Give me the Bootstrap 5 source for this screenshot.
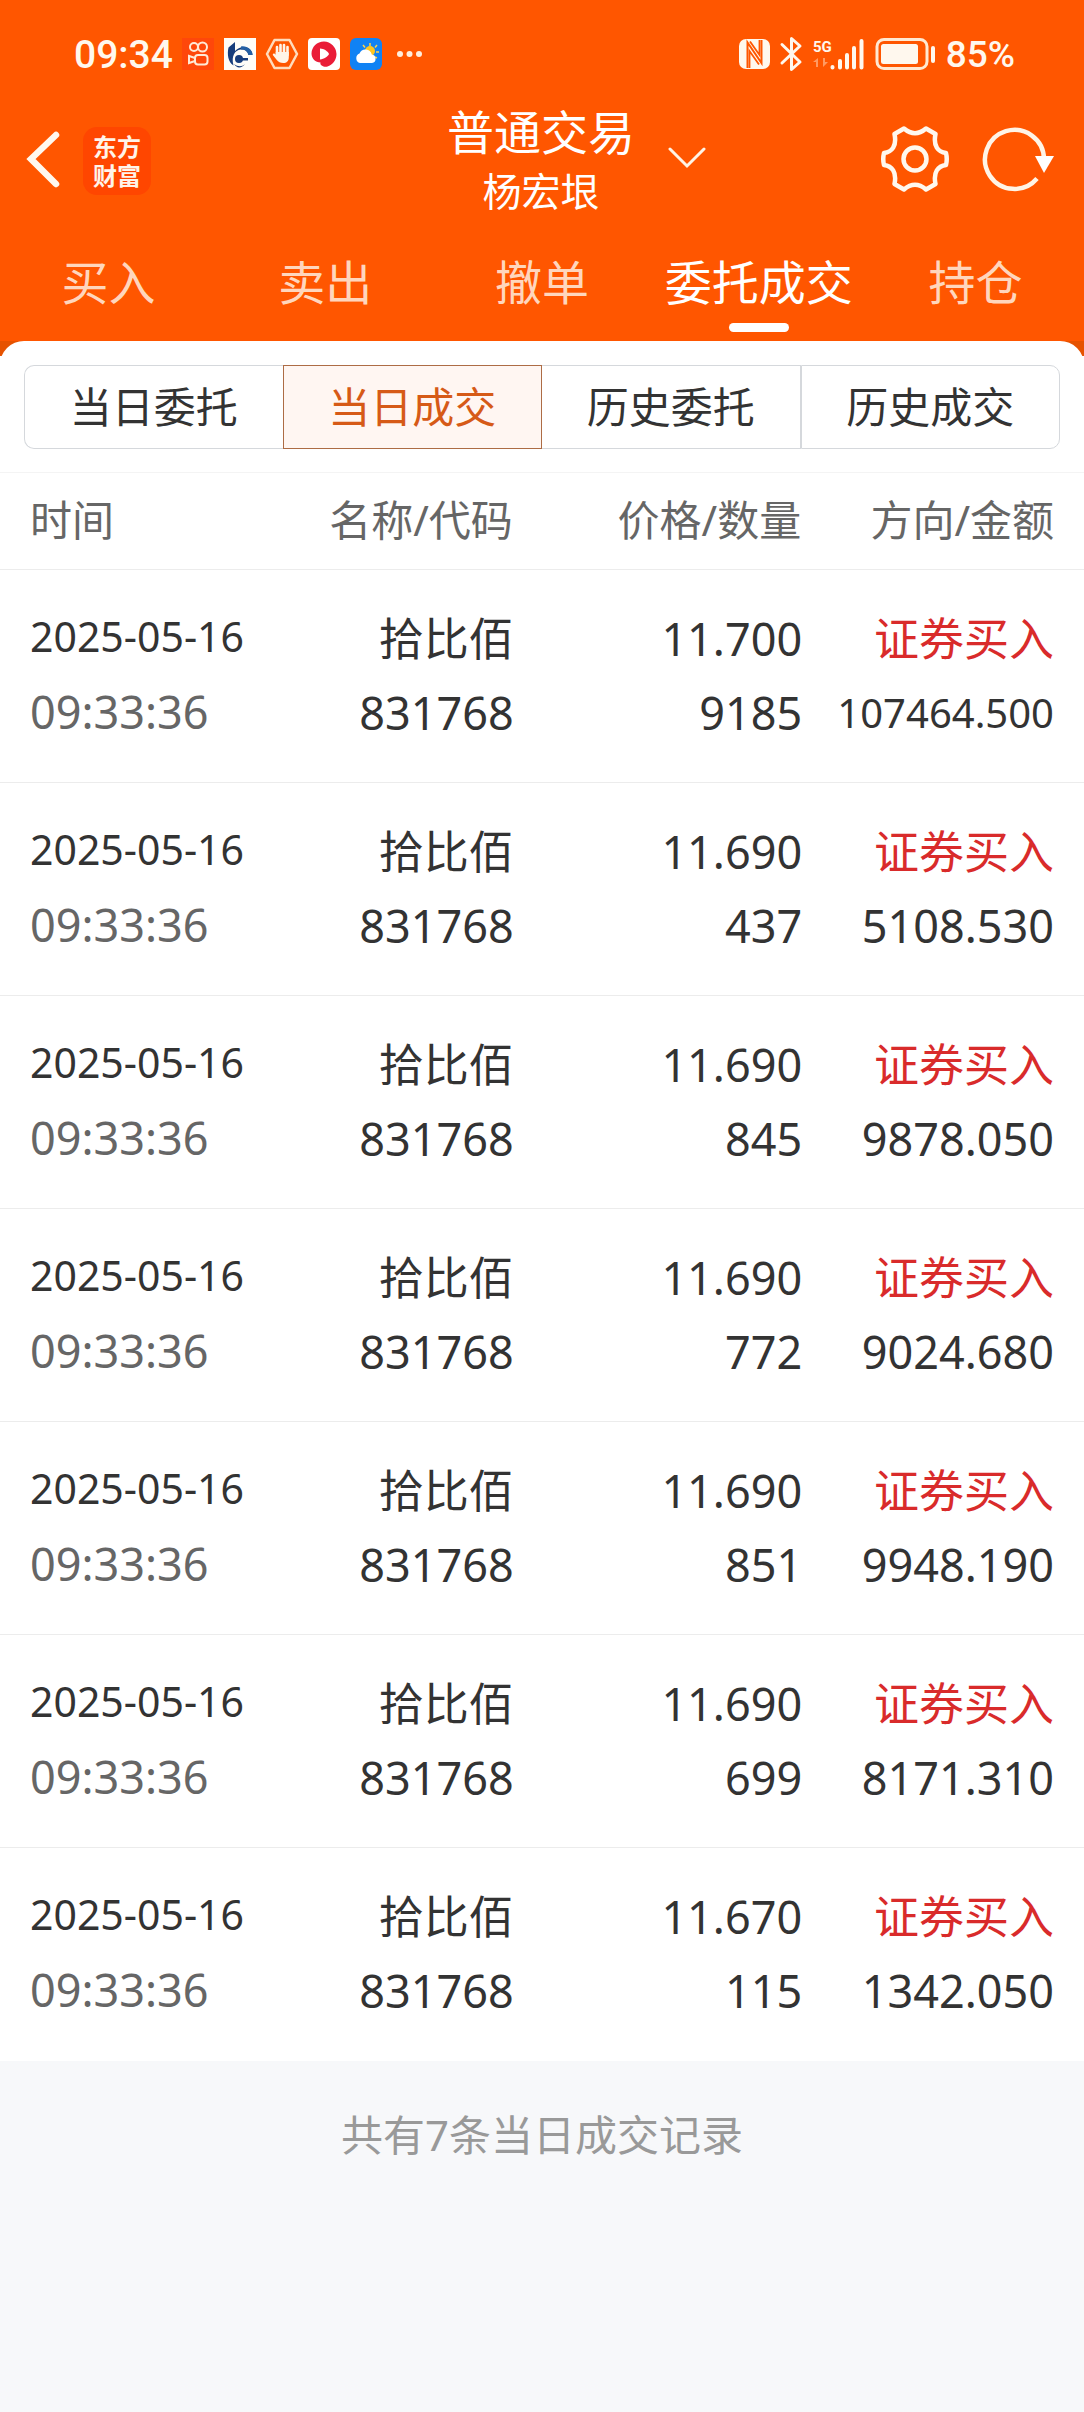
<!DOCTYPE html>
<html lang="zh-CN">
<head>
<meta charset="utf-8">
<meta name="viewport" content="width=device-width, initial-scale=1">
<title>普通交易</title>
<link rel="stylesheet" href="https://cdn.jsdelivr.net/npm/bootstrap@5.3.0/dist/css/bootstrap.min.css">
<script src="https://cdn.jsdelivr.net/npm/bootstrap@5.3.0/dist/js/bootstrap.bundle.min.js"></script>
<style>
  body { background: #f7f8fa; color: #333; font-family: "Noto Sans", "Noto Sans CJK SC", sans-serif; }
  svg { display: block; flex: none; }
  .app-top { background: #ff5600; color: #fff; }
  .status-bar { height: 102px; padding: 6px 69px 0 74px; font-family: Roboto, sans-serif; font-weight: 500; color: #fff8ee; }
  .clock { font-size: 39px; line-height: 48px; padding-top: 2px; margin-right: 9px; }
  .battery-level { font-size: 37px; line-height: 48px; padding-top: 2px; margin-left: 9px; }
  .title-bar { display: grid; grid-template-columns: 1fr auto 1fr; padding: 0 28px 0 26px; }
  .title-main { font-size: 47px; line-height: 60px; }
  .title-sub { font-size: 39px; line-height: 58px; }
  .title-menu { color: #fff; }
  .title-menu svg { left: 100%; top: 44px; margin-left: 33px; }
  .icon-gear { margin-right: 32px; }
  .brand-logo { width: 68px; height: 68px; border-radius: 14px; background: #ff4600; color: #fff4ea; font-size: 24px; line-height: 29px; font-weight: 700; margin-left: 22px; }
  .tab-row a { color: #ffd6bd; font-size: 47px; line-height: 64px; padding-top: 30px; padding-bottom: 9px; text-decoration: none; }
  .tab-row a::after { content: ""; display: block; width: 60px; height: 9px; border-radius: 5px; margin: 9px auto 0; }
  .tab-row a.active { color: #fff; }
  .tab-row a.active::after { background: #fff; }
  .sheet-back { background: linear-gradient(#e65200 0 15px, #fff 15px); }
  .sheet { background: #fff; border-radius: 24px 24px 0 0; padding: 24px 24px 23px; }
  .seg { height: 84px; font-size: 42px; line-height: 60px; padding: 0; border: 1px solid #d5d8dc; border-radius: 0; background: #fff; color: #333; flex: 1 1 0; }
  .seg:first-child { border-radius: 10px 0 0 10px; border-right: 0; }
  .seg:last-child { border-radius: 0 10px 10px 0; }
  .seg:nth-child(3) { border-left: 0; }
  .seg.active { background: #fff6f2; border-color: #ad6c45; color: #d65a17; }
  .deals { width: 100%; table-layout: fixed; background: #fff; }
  .deals th { font-size: 42px; line-height: 92px; padding-bottom: 3px; font-weight: 400; color: #666; border-top: 1px solid #f4f4f4; border-bottom: 1px solid #ececec; text-align: right; }
  .deals td { font-size: 45px; line-height: 74px; padding: 32px 0 28px; border-bottom: 1px solid #ececec; text-align: right; vertical-align: top; white-space: nowrap; }
  .deals tr > :first-child { text-align: left; padding-left: 30px; }
  .deals tr > :last-child { padding-right: 30px; }
  .deals tbody tr:last-child td { border-bottom-color: #fff; }
  .c-time { width: 24%; } .c-name { width: 23.4%; } .c-price { width: 26.6%; } .c-side { width: 26%; }
  .day { font-size: 41px; line-height: 68px; }
  .clock-time { line-height: 84px; color: #666; }
  .side-buy { color: #d92b2b; }
  .long-sum { font-size: 40px; }
  .total-note { font-size: 42px; line-height: 60px; color: #999; padding-top: 44px; }
</style>
</head>
<body>
<header class="app-top">
  <div class="status-bar d-flex align-items-center justify-content-between">
    <div class="d-flex align-items-center">
      <span class="clock">09:34</span>
      <svg width="246" height="32" viewBox="0 0 246 32" aria-hidden="true">
        <rect width="32" height="32" fill="#ff470a"/>
        <g fill="none" stroke="#ffe9d6" stroke-width="2">
          <circle cx="12" cy="9" r="4"/><circle cx="20.500" cy="9" r="4.500"/>
          <rect x="13" y="17" width="12.500" height="9.500" rx="3"/><path d="M13 20l-6-2v7l6-2"/>
        </g>
        <g transform="translate(42)">
          <rect width="32" height="32" fill="#fffdf8"/>
          <path d="M4.500 9.500L11 4v9c4-4 9-5 13-3 3 1.500 4.500 4 4.500 7h-4c-1-4-4-6-8-5.500C11 12 7 18 9.500 27.500 4 24 3 16 4.500 9.500z" fill="#173d7c"/>
          <path d="M17 8.500c6-1 11 3 11.500 8.500h-4c-.5-4-3-6-7.500-5.500z" fill="#2560a4"/>
          <circle cx="15" cy="21" r="4" fill="#173d7c"/><path d="M15 20h9v2.500h-9z" fill="#173d7c"/>
          <path d="M10 26c4 3 8 3 11 0-3 4-8 5-11 0z" fill="#173d7c"/>
        </g>
        <g transform="translate(84)">
          <path d="M8.500 2h15L31 16l-7.500 14h-15L1 16z" fill="none" stroke="#ffdcbc" stroke-width="2.500" stroke-linejoin="round"/>
          <path d="M11 17V9M14.500 15V7M18 15V7M21.500 17V9" stroke="#fff4e8" stroke-width="2.600" stroke-linecap="round"/>
          <path d="M9.700 14h13.100v5c0 4-2 6-5.500 6-3 0-5-1-6.500-3l-4-5c0-2 2-2 3 0z" fill="#fff4e8"/>
        </g>
        <g transform="translate(126)">
          <rect width="32" height="32" rx="4" fill="#fff"/>
          <path d="M16 3.500a13 13 0 0 1 12.500 12.500c0 6-4 11-9 12.500-3 1-8-1-7-4-5 0-9-4-9-9C3.500 9 9 3.500 16 3.500z" fill="#ea1c38"/>
          <path d="M12 10.500c4 0 8 3 9 5.500-1 2.500-5 5-9 5.500z" fill="#fff"/>
        </g>
        <g transform="translate(168)">
          <rect width="32" height="32" rx="6" fill="#1082f4"/>
          <path d="M20 5v3M13 7l2 2.500M27 7l-2 2.500M29 14h-3M27 20l-2-1" stroke="#ffd34a" stroke-width="1.500"/>
          <circle cx="20" cy="13" r="5" fill="#ffc61e"/>
          <path d="M10 25a5 5 0 0 1-.5-9.500 6.500 6.500 0 0 1 12.300 1A4.300 4.300 0 0 1 22 25z" fill="#fff"/>
        </g>
        <g fill="#ffeedd"><circle cx="218" cy="16" r="3"/><circle cx="227.500" cy="16" r="3"/><circle cx="237" cy="16" r="3"/></g>
      </svg>
    </div>
    <div class="d-flex align-items-center">
      <svg width="198" height="36" viewBox="0 0 198 36" aria-hidden="true" fill="#fff8ee">
        <rect y="3" width="31" height="30" rx="7"/>
        <path d="M8.500 32V6.500L22.500 27V4" fill="none" stroke="#ff5600" stroke-width="2"/>
        <path d="M10.500 32V15L20 28.500M20.500 4v15L11 5.500" fill="none" stroke="#ff5600" stroke-width="1.800"/>
        <path d="M43 8.500L61 26l-8.500 7.500V2.500L61 10 43 27" fill="none" stroke="#fff8ee" stroke-width="3" stroke-linejoin="round" stroke-linecap="round"/>
        <text x="74" y="16" font-family="Roboto" font-size="15" font-weight="700">5G</text>
        <path d="M79 22v9h-2v-5h-3zM84 22v9l5-5h-3v-4z" fill="#ff9a62"/>
        <path d="M93.500 31v.5M101 25v6.500M108 19v12.500M115 12v19.500M122.500 5v26.500" stroke="#fff8ee" stroke-width="4" stroke-linecap="round"/>
        <rect x="138" y="3.500" width="50" height="29" rx="7" fill="none" stroke="#ffe9d2" stroke-width="3"/>
        <rect x="142" y="8" width="37" height="20" rx="2.500"/>
        <rect x="192" y="10" width="4" height="17" rx="2"/>
      </svg>
      <span class="battery-level">85%</span>
    </div>
  </div>

  <div class="title-bar align-items-center">
    <div class="d-flex align-items-center">
      <button type="button" class="btn p-0 border-0" aria-label="返回">
        <svg width="35" height="60" viewBox="0 0 35 60"><path d="M30 4L5 28l25 25" fill="none" stroke="#fff8ee" stroke-width="6.500" stroke-linecap="round" stroke-linejoin="miter"/></svg>
      </button>
      <div class="brand-logo d-flex flex-column align-items-center justify-content-center"><span>东方</span><span>财富</span></div>
    </div>
    <button type="button" class="title-menu btn p-0 border-0 rounded-0 position-relative">
      <span class="title-main d-block">普通交易</span>
      <span class="title-sub d-block">杨宏垠</span>
      <svg class="position-absolute" width="38" height="24" viewBox="0 0 38 24"><path d="M2 3l17 17L36 3" fill="none" stroke="#fff4e6" stroke-width="3" stroke-linecap="round"/></svg>
    </button>
    <div class="d-flex align-items-center justify-content-end">
      <button type="button" class="icon-gear btn p-0 border-0" aria-label="设置">
        <svg width="70" height="70" viewBox="-35 -33 70 70" fill="none" stroke="#fff8ee" stroke-width="4.500" stroke-linejoin="round">
          <path d="M-11-30.500Q0-21 11-30.500L20.500-25C18-13 23-7 31-6Q32.500 0 31 6C23 7 18 13 20.500 25L11 30.500Q0 21-11 30.500L-20.500 25C-18 13-23 7-31 6Q-32.500 0-31-6C-23-7-18-13-20.500-25Z"/>
          <circle r="11.500"/>
        </svg>
      </button>
      <button type="button" class="btn p-0 border-0" aria-label="刷新">
        <svg width="74" height="70" viewBox="-33 -33 74 70"><path d="M29 0A29.500 29.500 0 1 0 22 19.500" fill="none" stroke="#fff4e6" stroke-width="4.500"/><path d="M20-3h19L29 14z" fill="#fff"/></svg>
      </button>
    </div>
  </div>

  <nav class="tab-row row g-0 text-center">
    <a class="col" href="#">买入</a>
    <a class="col" href="#">卖出</a>
    <a class="col" href="#">撤单</a>
    <a class="col active" href="#" aria-current="page">委托成交</a>
    <a class="col" href="#">持仓</a>
  </nav>
</header>

<main>
  <div class="sheet-back">
    <div class="sheet d-flex">
      <button type="button" class="btn seg">当日委托</button>
      <button type="button" class="btn seg active">当日成交</button>
      <button type="button" class="btn seg">历史委托</button>
      <button type="button" class="btn seg">历史成交</button>
    </div>
  </div>

  <table class="deals">
    <thead>
      <tr><th class="c-time" scope="col">时间</th><th class="c-name" scope="col">名称/代码</th><th class="c-price" scope="col">价格/数量</th><th class="c-side" scope="col">方向/金额</th></tr>
    </thead>
    <tbody>
      <tr><td><div class="day">2025-05-16</div><div class="clock-time">09:33:36</div></td><td><div>拾比佰</div><div>831768</div></td><td><div>11.700</div><div>9185</div></td><td><div class="side-buy">证券买入</div><div class="long-sum">107464.500</div></td></tr>
      <tr><td><div class="day">2025-05-16</div><div class="clock-time">09:33:36</div></td><td><div>拾比佰</div><div>831768</div></td><td><div>11.690</div><div>437</div></td><td><div class="side-buy">证券买入</div><div>5108.530</div></td></tr>
      <tr><td><div class="day">2025-05-16</div><div class="clock-time">09:33:36</div></td><td><div>拾比佰</div><div>831768</div></td><td><div>11.690</div><div>845</div></td><td><div class="side-buy">证券买入</div><div>9878.050</div></td></tr>
      <tr><td><div class="day">2025-05-16</div><div class="clock-time">09:33:36</div></td><td><div>拾比佰</div><div>831768</div></td><td><div>11.690</div><div>772</div></td><td><div class="side-buy">证券买入</div><div>9024.680</div></td></tr>
      <tr><td><div class="day">2025-05-16</div><div class="clock-time">09:33:36</div></td><td><div>拾比佰</div><div>831768</div></td><td><div>11.690</div><div>851</div></td><td><div class="side-buy">证券买入</div><div>9948.190</div></td></tr>
      <tr><td><div class="day">2025-05-16</div><div class="clock-time">09:33:36</div></td><td><div>拾比佰</div><div>831768</div></td><td><div>11.690</div><div>699</div></td><td><div class="side-buy">证券买入</div><div>8171.310</div></td></tr>
      <tr><td><div class="day">2025-05-16</div><div class="clock-time">09:33:36</div></td><td><div>拾比佰</div><div>831768</div></td><td><div>11.670</div><div>115</div></td><td><div class="side-buy">证券买入</div><div>1342.050</div></td></tr>
    </tbody>
  </table>
  <p class="total-note text-center mb-0">共有7条当日成交记录</p>
</main>
</body>
</html>
